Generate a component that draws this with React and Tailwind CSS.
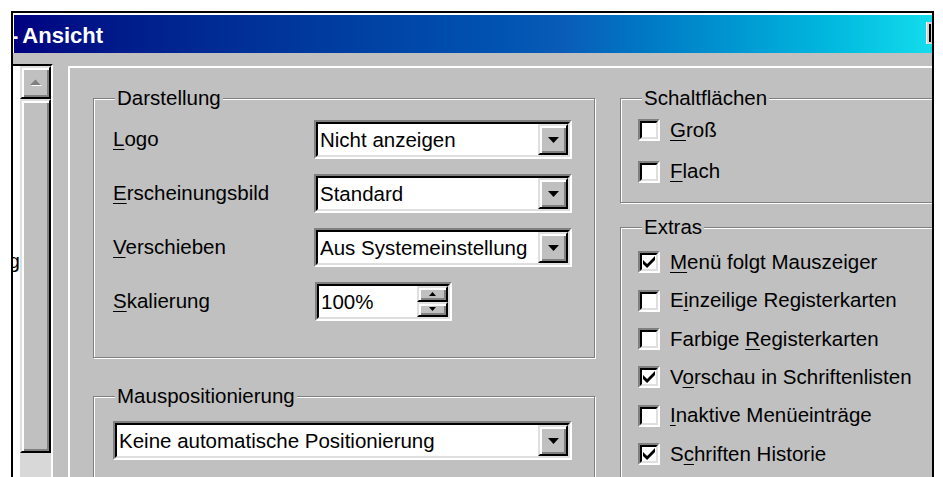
import React from "react";

// Windows 9x style "Ansicht" options page

const raised =
  "border-2 border-t-[#dfdfdf] border-l-[#dfdfdf] border-r-black border-b-black shadow-[inset_2px_2px_0_#fff,inset_-2px_-2px_0_#808080]";
const sunkenOuter =
  "border-2 border-t-[#808080] border-l-[#808080] border-r-white border-b-white";
const sunkenInner =
  "border-2 border-t-black border-l-black border-r-[#dfdfdf] border-b-[#dfdfdf]";

function Label({ text, u }) {
  if (u == null) return <span>{text}</span>;
  return (
    <span>
      {text.slice(0, u)}
      <span className="underline decoration-1 underline-offset-[3px]">{text[u]}</span>
      {text.slice(u + 1)}
    </span>
  );
}

function Arrow({ up, w = 11, h = 6, color = "#000" }) {
  return (
    <svg width={w} height={h} viewBox={`0 0 ${w} ${h}`}>
      <path d={up ? `M0 ${h}H${w}L${w / 2} 0Z` : `M0 0H${w}L${w / 2} ${h}Z`} fill={color} />
    </svg>
  );
}

function Combo({ value, width }) {
  return (
    <div className={`flex h-[39px] ${sunkenOuter} ${width}`}>
      <div className={`flex flex-1 min-w-0 bg-white ${sunkenInner}`}>
        <span className="flex-1 pl-[2px] leading-[31px] whitespace-nowrap overflow-hidden">{value}</span>
        <div className={`w-[30px] h-full flex items-center justify-center bg-[#c0c0c0] ${raised}`}>
          <Arrow />
        </div>
      </div>
    </div>
  );
}

function Spin({ value }) {
  return (
    <div className={`flex w-[137px] h-[39px] ${sunkenOuter}`}>
      <div className={`flex flex-1 bg-white ${sunkenInner}`}>
        <span className="flex-1 pl-[2px] leading-[31px]">{value}</span>
        <div className="w-[31px] flex flex-col">
          <div className={`flex-1 flex items-center justify-center bg-[#c0c0c0] ${raised}`}>
            <Arrow up w={7} h={4} />
          </div>
          <div className={`flex-1 flex items-center justify-center bg-[#c0c0c0] ${raised}`}>
            <Arrow w={7} h={4} />
          </div>
        </div>
      </div>
    </div>
  );
}

function Check({ label, u, checked }) {
  return (
    <div className="flex items-center h-[38.4px]">
      <div className={`w-[22px] h-[22px] ${sunkenOuter}`}>
        <div className={`w-full h-full bg-white flex items-center justify-center ${sunkenInner}`}>
          {checked && (
            <svg width="12" height="12" viewBox="0 0 7 7">
              <path d="M0 2.3L2.4 4.6L7 0V2.4L2.4 7L0 4.7Z" fill="#000" />
            </svg>
          )}
        </div>
      </div>
      <span className="ml-[10px] whitespace-nowrap">
        <Label text={label} u={u} />
      </span>
    </div>
  );
}

function Group({ title, className, children }) {
  return (
    <div
      className={`relative border border-[#808080] shadow-[inset_1px_1px_0_#fff,1px_1px_0_#fff] ${className}`}
    >
      <span className="absolute left-[21px] top-[-13px] px-[2px] bg-[#c0c0c0] leading-[24px] whitespace-nowrap">
        {title}
      </span>
      {children}
    </div>
  );
}

const rows = [
  { label: "Logo", u: 0, value: "Nicht anzeigen" },
  { label: "Erscheinungsbild", u: 0, value: "Standard" },
  { label: "Verschieben", u: 0, value: "Aus Systemeinstellung" },
];

const extras = [
  { label: "Menü folgt Mauszeiger", u: 0, checked: true },
  { label: "Einzeilige Registerkarten", u: 1 },
  { label: "Farbige Registerkarten", u: 8 },
  { label: "Vorschau in Schriftenlisten", u: 1, checked: true },
  { label: "Inaktive Menüeinträge", u: 0 },
  { label: "Schriften Historie", u: 1, checked: true },
];

export default function App() {
  return (
    <div className="w-[943px] h-[477px] overflow-hidden bg-white pl-[11px] pt-[11px] text-[20.5px] text-black font-['Liberation_Sans',Arial,sans-serif]">
      <div className="w-[923px] h-[480px] flex flex-col overflow-hidden bg-white border-l-2 border-t-2 border-r-2 border-black pt-[2px]">
        {/* title bar */}
        <div className="relative ml-[1px] h-[38px] shrink-0 flex items-center overflow-hidden bg-gradient-to-r from-[#000080] via-[#0a5cb8] via-60% to-[#14dcec] text-white font-bold text-[22px] pt-[2px]">
          <span className="-ml-[3px]">-</span>
          <span className="ml-[4px]">Ansicht</span>
          <div className="absolute right-0 top-[7px] w-[6px] h-[22px] bg-[#d4d4d4] border-l border-white flex items-center">
            <div className="ml-[2px] w-[2px] h-[18px] bg-black" />
          </div>
        </div>

        <div className="flex flex-1 bg-[#c0c0c0]">
          {/* list box with its scroll bar */}
          <div className="mt-[11px] w-[40px] h-[430px] shrink-0 flex border-t-2 border-t-black border-r-2 border-r-white">
            <div className="w-[7px] bg-white overflow-hidden flex justify-end">
              <span className="mt-[183px] leading-[24px] whitespace-nowrap">Darstellung</span>
            </div>
            <div className="w-[31px] flex flex-col">
              <div className={`h-[33px] flex items-center justify-center bg-[#c0c0c0] ${raised}`}>
                <svg width="12" height="7" viewBox="0 0 12 7">
                  <path d="M1 7H12L6.5 1.5Z" fill="#fff" />
                  <path d="M0 6H11L5.5 0.5Z" fill="#808080" />
                </svg>
              </div>
              <div className={`h-[354px] bg-[#c0c0c0] ${raised}`} />
              <div className="flex-1 bg-[#d8d8d8]" />
            </div>
          </div>

          {/* tab page */}
          <div className="ml-[15px] mt-[13px] flex-1 flex border-t-2 border-l-2 border-white pl-[23px] pt-[30px]">
            <div className="w-[502px] shrink-0 flex flex-col">
              <Group title="Darstellung" className="h-[260px] pl-[19px] pt-[21px]">
                <div className="flex flex-col gap-[15px]">
                  {rows.map((r) => (
                    <div key={r.label} className="flex items-center">
                      <span className="w-[201px]">
                        <Label text={r.label} u={r.u} />
                      </span>
                      <Combo value={r.value} width="w-[258px]" />
                    </div>
                  ))}
                  <div className="flex items-center">
                    <span className="w-[202px]">
                      <Label text="Skalierung" u={0} />
                    </span>
                    <Spin value="100%" />
                  </div>
                </div>
              </Group>
              <Group title="Mauspositionierung" className="mt-[38px] h-[120px] pl-[19px] pt-[24px]">
                <Combo value="Keine automatische Positionierung" width="w-[459px]" />
              </Group>
            </div>

            <div className="ml-[25px] w-[340px] shrink-0 flex flex-col">
              <Group title="Schaltflächen" className="h-[105px] pl-[17px] pt-[12px]">
                <div className="flex flex-col gap-[3px]">
                  <Check label="Groß" u={0} />
                  <Check label="Flach" u={0} />
                </div>
              </Group>
              <Group title="Extras" className="mt-[24px] h-[300px] pl-[17px] pt-[15px]">
                {extras.map((e) => (
                  <Check key={e.label} {...e} />
                ))}
              </Group>
            </div>
          </div>
        </div>
      </div>
    </div>
  );
}
